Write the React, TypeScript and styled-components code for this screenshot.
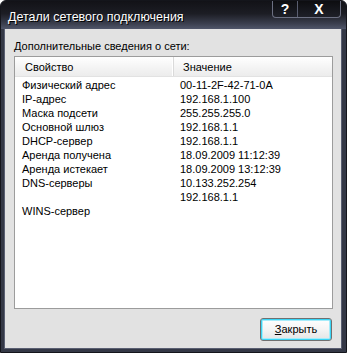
import React from 'react';
import styled, {createGlobalStyle} from 'styled-components';

const GlobalStyle = createGlobalStyle`
  html, body {
    margin: 0;
    padding: 0;
    background: #ffffff;
  }
  * {
    box-sizing: border-box;
  }
`;

const Window = styled.div`
  width: 347px;
  height: 353px;
  display: flex;
  flex-direction: column;
  background: #343846;
  border: 1px solid #14151b;
  border-radius: 6px 6px 0 0;
  overflow: hidden;
  font-family: "Liberation Sans", Arial, sans-serif;
  font-size: 11px;
  color: #000000;
`;

const TitleBar = styled.div`
  height: 28px;
  flex-shrink: 0;
  display: flex;
  flex-direction: row;
  align-items: flex-start;
  padding-left: 7px;
  background: linear-gradient(#121217 0%, #1c1d24 45%, #3a3e4d 80%, #50566a 100%);
`;

const Title = styled.div`
  margin-top: 9px;
  color: #ffffff;
  font-size: 12.5px;
  text-shadow: 1px 1px 0 #000000;
`;

const TitleButtons = styled.div`
  margin-left: auto;
  margin-right: 5px;
  margin-top: -1px;
  display: flex;
  flex-direction: row;
  height: 18px;
  border: 1px solid #6c7082;
  border-top: none;
  border-radius: 0 0 4px 4px;
  background: linear-gradient(#0c0c0f, #1e2028);
  overflow: hidden;
`;

const TitleButton = styled.div<{wide?: boolean}>`
  width: ${props => props.wide ? 43 : 24}px;
  display: flex;
  align-items: center;
  justify-content: center;
  color: #ffffff;
  font-family: "Liberation Sans", Arial, sans-serif;
  font-weight: bold;
  font-size: 14px;
  padding-top: 1px;
  & + & {
    border-left: 1px solid #5a5e70;
  }
`;

const Client = styled.div`
  flex: 1;
  margin: 0 4px 3px 3px;
  background: #e2e2e2;
  border: 1px solid #5a5f72;
  border-top: none;
  display: flex;
  flex-direction: column;
  padding: 11px 8px 7px 9px;
`;

const Label = styled.div`
  height: 13px;
  line-height: 13px;
  margin-bottom: 3px;

  u {
    text-decoration: underline;
  }
`;

const ListBox = styled.div`
  height: 253px;
  background: #ffffff;
  border: 1px solid #9c9c9c;
  display: flex;
  flex-direction: column;
`;

const HeaderRow = styled.div`
  height: 20px;
  display: grid;
  grid-template-columns: 159px 1fr;
  background: linear-gradient(#ffffff 0%, #f3f3f3 60%, #ececec 100%);
  border-bottom: 1px solid #e2e2e2;
  margin-bottom: 1px;
`;

const HeaderCell = styled.div<{first?: boolean}>`
  display: flex;
  align-items: center;
  padding-left: ${props => props.first ? 10 : 9}px;
  border-right: ${props => props.first ? '1px solid #dadada' : 'none'};
  box-shadow: ${props => props.first ? 'inset -1px 0 0 #ffffff' : 'none'};
`;

const Row = styled.div`
  height: 14px;
  line-height: 14px;
  display: grid;
  grid-template-columns: 159px 1fr;
`;

const Cell = styled.div<{first?: boolean}>`
  padding-left: ${props => props.first ? 7 : 6}px;
  white-space: nowrap;
`;

const Footer = styled.div`
  margin-top: auto;
  display: flex;
  justify-content: flex-end;
  padding-right: 1px;
`;

const Button = styled.div`
  width: 72px;
  height: 23px;
  border: 1px solid #707070;
  border-radius: 3px;
  background: linear-gradient(#ffffff 0%, #f4f4f4 50%, #e4e4e4 100%);
  box-shadow: inset 0 0 0 1px #39d4f4, inset 0 0 0 2px #a8ecfa;
  display: flex;
  align-items: center;
  justify-content: center;
  padding-bottom: 1px;

  u {
    text-decoration: underline;
  }
`;

const rows: [string, string][] = [
  ['Физический адрес', '00-11-2F-42-71-0A'],
  ['IP-адрес', '192.168.1.100'],
  ['Маска подсети', '255.255.255.0'],
  ['Основной шлюз', '192.168.1.1'],
  ['DHCP-сервер', '192.168.1.1'],
  ['Аренда получена', '18.09.2009 11:12:39'],
  ['Аренда истекает', '18.09.2009 13:12:39'],
  ['DNS-серверы', '10.133.252.254'],
  ['', '192.168.1.1'],
  ['WINS-сервер', ''],
];

const App = () => {
  return (
    <>
      <GlobalStyle/>
      <Window>
        <TitleBar>
          <Title>Детали сетевого подключения</Title>
          <TitleButtons>
            <TitleButton>?</TitleButton>
            <TitleButton wide>X</TitleButton>
          </TitleButtons>
        </TitleBar>
        <Client>
          <Label><u>Д</u>ополнительные сведения о сети:</Label>
          <ListBox>
            <HeaderRow>
              <HeaderCell first>Свойство</HeaderCell>
              <HeaderCell>Значение</HeaderCell>
            </HeaderRow>
            {rows.map(([name, value], i) => (
              <Row key={i}>
                <Cell first>{name}</Cell>
                <Cell>{value}</Cell>
              </Row>
            ))}
          </ListBox>
          <Footer>
            <Button><u>З</u>акрыть</Button>
          </Footer>
        </Client>
      </Window>
    </>
  );
};

export default App;
